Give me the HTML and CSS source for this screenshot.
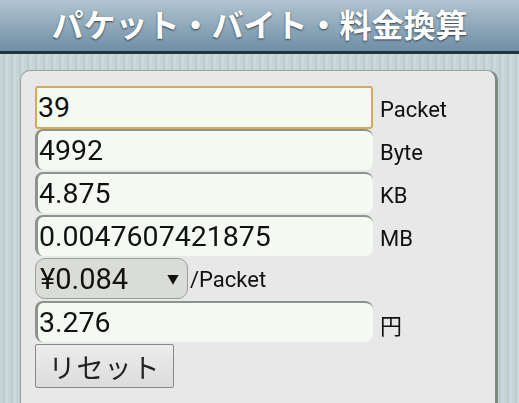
FILE: index.html
```html
<!DOCTYPE html>
<html lang="ja">
<head>
  <meta charset="UTF-8" />
  <title>パケット・バイト・料金換算</title>
  <link rel="stylesheet" href="styles.css">
</head>
<body>
  <div class="header">
    <h1>パケット・バイト・料金換算</h1>
  </div>

  <div class="page">
    <div class="panel">
      <div class="row">
        <input class="field focus" type="text" value="39" autofocus>
        <span class="unit">Packet</span>
      </div>
      <div class="row">
        <input class="field" type="text" value="4992">
        <span class="unit">Byte</span>
      </div>
      <div class="row">
        <input class="field" type="text" value="4.875">
        <span class="unit">KB</span>
      </div>
      <div class="row">
        <input class="field" type="text" value="0.0047607421875">
        <span class="unit">MB</span>
      </div>
      <div class="row">
        <div class="select">¥0.084 <span class="arrow">▼</span></div>
        <span class="unit per">/Packet</span>
      </div>
      <div class="row">
        <input class="field" type="text" value="3.276">
        <span class="unit">円</span>
      </div>
      <div class="row">
        <button class="reset">リセット</button>
      </div>
    </div>
  </div>
</body>
</html>
```

FILE: styles.css
```css
body { margin: 0; font-family: Roboto, "Noto Sans CJK JP", sans-serif; color: #111; background: #c4d2d4; overflow: hidden; }
.header { height: 51px; border-bottom: 3px solid #1f3441; background: linear-gradient(#b2c4d0, #6f8ea5); text-align: center; }
h1 { margin: 0; font-family: "Noto Sans CJK JP", sans-serif; font-size: 32px; line-height: 46px; font-weight: bold; color: #fff; text-shadow: 0 1px 2px #2a3c48; }
.page { height: 349px; padding: 16px 21px 0 20px; background: repeating-linear-gradient(90deg, #c6d4d6 0 3px, #bccbcd 3px 5px, #cbd8d9 5px 8px); }
.panel { height: 340px; box-sizing: border-box; background: #e8e8e8; border: 1px solid #9aa29e; border-right: 3px solid #7f8a85; border-bottom: none; border-radius: 10px 10px 0 0; padding: 15px 0 0 14px; display: flex; flex-direction: column; gap: 2px; }
.row { display: flex; align-items: center; }
.field { width: 338px; height: 41px; box-sizing: border-box; margin: 0; padding: 0 0 0 1px; font-family: Roboto, sans-serif; font-size: 28.5px; color: #111; background: #f4faf2; border: none; border-top: 2px solid #8c938e; border-left: 3px solid #8c938e; border-radius: 8px; outline: none; }
.field.focus { height: 43px; margin-bottom: -2px; border: 2px solid #d6aa5a; border-radius: 3px; }
.unit { margin-left: 7px; padding-top: 5px; font-size: 22px; }
.unit.per { margin-left: 2px; padding-top: 2px; }
.select { width: 153px; height: 41px; box-sizing: border-box; display: flex; align-items: center; justify-content: space-between; padding: 0 8px 0 4px; font-size: 29px; background: #d9dcd7; border: 1px solid #999f9a; border-radius: 10px; }
.arrow { font-size: 12px; }
.reset { width: 139px; height: 44px; margin: 0; font-family: "Noto Sans CJK JP", sans-serif; font-size: 27px; color: #222; letter-spacing: 1px; background: linear-gradient(#ececec, #dcdcdc); border: 1px solid #888; border-radius: 2px; }
```
